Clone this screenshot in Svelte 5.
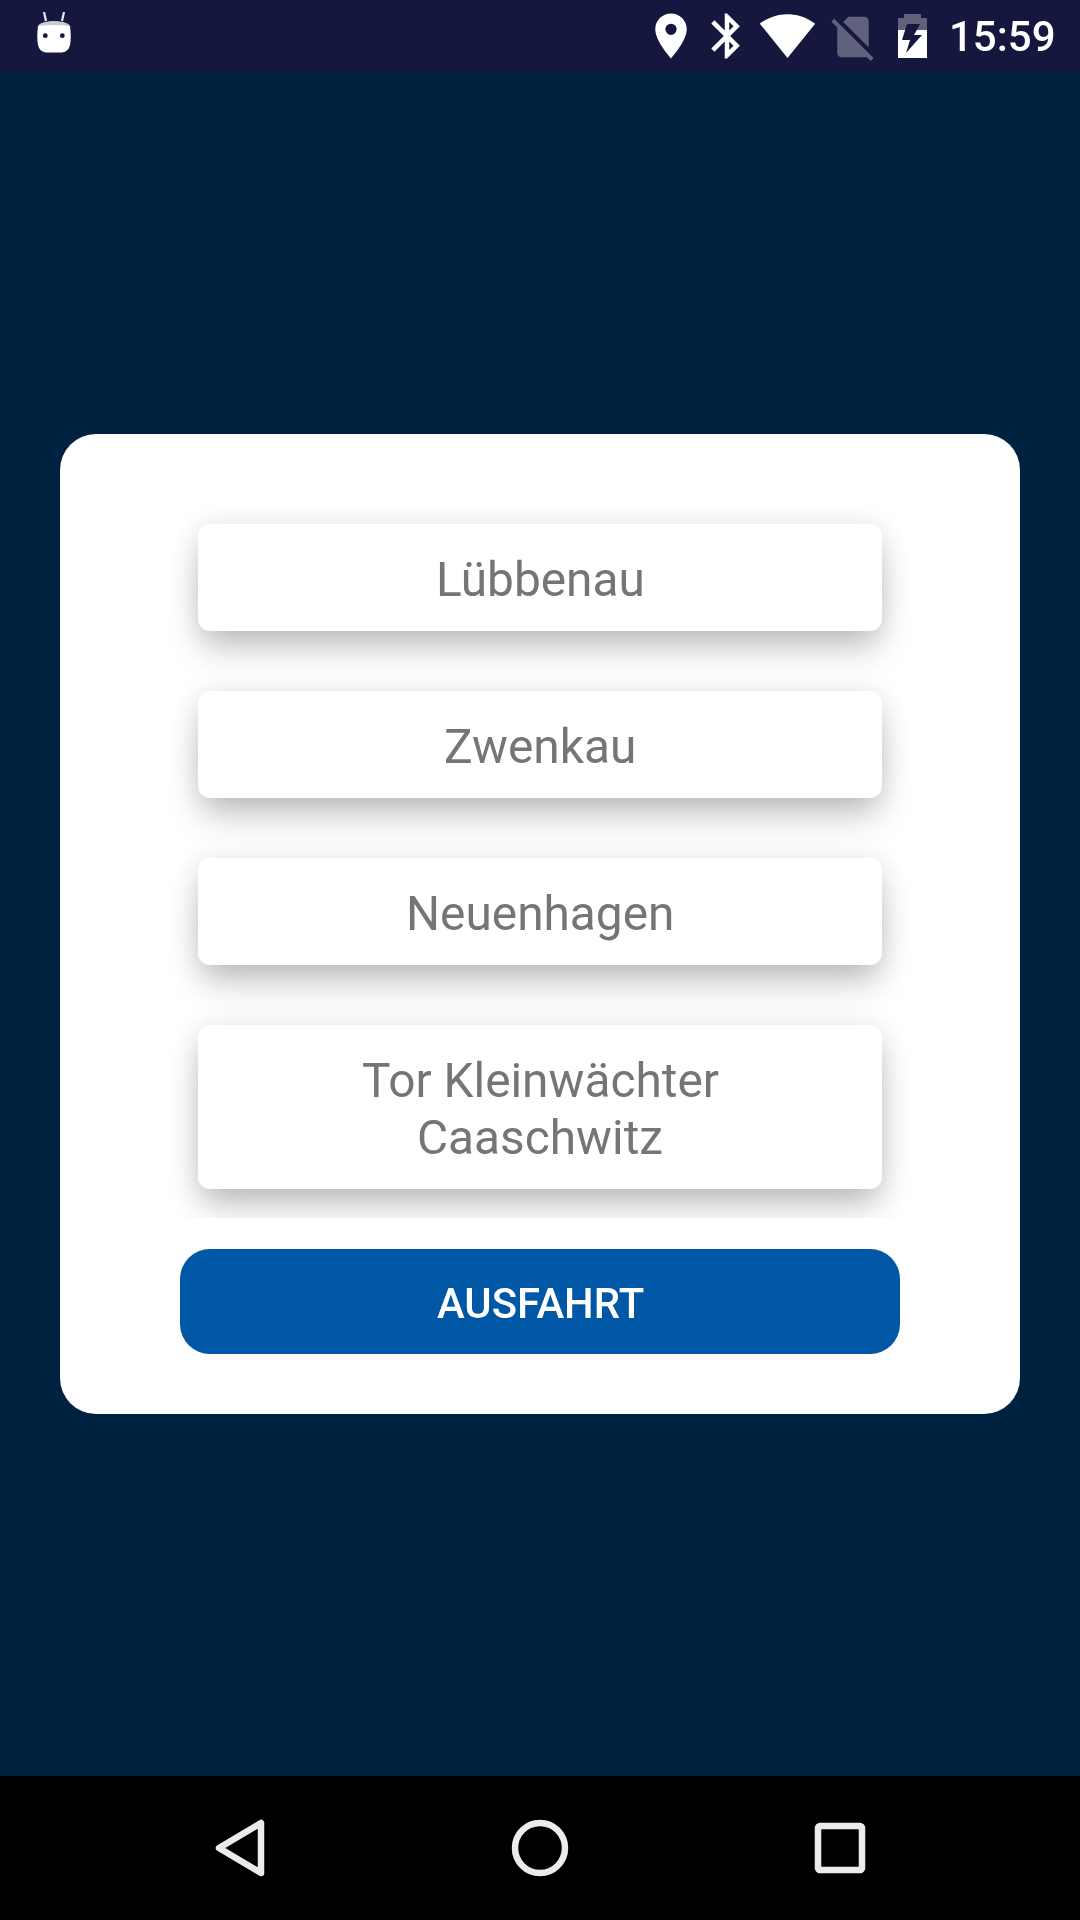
<script>
  const stops = [
    { id: 1, lines: ['Lübbenau'] },
    { id: 2, lines: ['Zwenkau'] },
    { id: 3, lines: ['Neuenhagen'] },
    { id: 4, lines: ['Tor Kleinwächter', 'Caaschwitz'] }
  ];
</script>

<div class="screen">
  <header class="status">
    <svg class="robot" viewBox="0 0 34 41" width="34" height="41">
      <path d="M7 0 L9 9 M27 0 L25 9" stroke="#e8e8ee" stroke-width="2.2" fill="none"/>
      <path d="M9 10 Q17 8.5 25 10 Q31 11 33 14 Q34.5 25 33 33 Q31.5 40 25 40.5 H9 Q2.5 40 1 33 Q-0.5 25 1 14 Q3 11 9 10Z" fill="#fff"/>
      <path d="M9 10 Q17 8.5 25 10 Q31 11 33 14 Q17 12 1 14 Q3 11 9 10Z" fill="#c9cad2"/>
      <circle cx="8.3" cy="23.7" r="2.4" fill="#15173f"/>
      <circle cx="25.3" cy="23.7" r="2.4" fill="#15173f"/>
    </svg>
    <div class="spacer"></div>
    <svg class="ic loc" viewBox="0 0 24 24"><path fill="#fff" d="M12 2C8.13 2 5 5.13 5 9c0 5.25 7 13 7 13s7-7.75 7-13c0-3.87-3.13-7-7-7zm0 9.5a2.5 2.5 0 0 1 0-5 2.5 2.5 0 0 1 0 5z"/></svg>
    <svg class="ic bt" viewBox="0 0 24 24"><path fill="#fff" d="M17.71 7.71L12 2h-1v7.59L6.41 5 5 6.41 10.59 12 5 17.59 6.41 19 11 14.41V22h1l5.71-5.71-4.3-4.29 4.3-4.29zM13 5.83l1.88 1.88L13 9.59V5.83zm1.88 10.46L13 18.17v-3.76l1.88 1.88z"/></svg>
    <svg class="ic wifi" viewBox="0 0 24 24"><path fill="#fff" d="M12.01 21.49L23.64 7c-.45-.34-4.93-4-11.64-4C5.28 3 .81 6.66.36 7l11.64 14.5.01-.01z"/></svg>
    <svg class="ic sim" viewBox="0 0 24 24"><path fill="#fff" fill-opacity=".32" d="M18.99 5c0-1.1-.89-2-1.99-2h-7L7.66 5.34 19 16.68 18.99 5zM3.65 3.88L2.38 5.15 5 7.77V19c0 1.1.9 2 2 2h10.01c.35 0 .67-.1.96-.26l1.88 1.88 1.27-1.27L3.65 3.88z"/></svg>
    <svg class="batt" viewBox="0 0 29 44" width="29" height="44">
      <path fill="#fff" fill-opacity=".32" d="M6 0H23V4H29V16H0V4H6Z"/>
      <path fill="#fff" d="M0 16H29V44H0Z"/>
      <path fill="#15173f" d="M9 10H22L16 21H24L8 39L12 26H4Z"/>
    </svg>
    <span class="time">15:59</span>
  </header>

  <main class="main">
    <section class="card">
      <div class="list">
        {#each stops as stop (stop.id)}
          <div class="item">
            {#each stop.lines as line}<span>{line}</span>{/each}
          </div>
        {/each}
      </div>
      <button class="exit"><span>AUSFAHRT</span></button>
    </section>
  </main>

  <nav class="nav">
    <svg class="nb" viewBox="0 0 60 60" width="60" height="60"><path d="M51 5 V55 L9 30 Z" fill="none" stroke="#ececec" stroke-width="6.5" stroke-linejoin="round"/></svg>
    <svg class="nb" viewBox="0 0 60 60" width="60" height="60"><circle cx="30" cy="30" r="25" fill="none" stroke="#ececec" stroke-width="6.5"/></svg>
    <svg class="nb" viewBox="0 0 60 60" width="60" height="60"><rect x="8" y="8" width="44" height="44" rx="2" fill="none" stroke="#ececec" stroke-width="6.5"/></svg>
  </nav>
</div>

<style>
  :global(body) { margin: 0; }
  .screen {
    width: 1080px;
    height: 1920px;
    display: flex;
    flex-direction: column;
    background: #002241;
    font-family: Roboto, sans-serif;
    overflow: hidden;
  }
  .status {
    height: 72px;
    flex: none;
    display: flex;
    align-items: center;
    background: #15173f;
    padding: 0 24px 0 37px;
    box-sizing: border-box;
  }
  .robot { margin-top: -7px; }
  .spacer { flex: 1; }
  .ic { width: 54px; height: 54px; flex: none; }
  .bt { margin-left: 2px; }
  .wifi { width: 57px; height: 57px; margin-left: 5px; margin-top: -1px; }
  .sim { margin-left: 10px; margin-top: 2px; }
  .batt { margin-left: 18px; }
  .time {
    margin-left: 22px;
    font-size: 42px;
    font-weight: 500;
    color: #fff;
    will-change: transform;
  }
  .main {
    flex: 1;
    display: flex;
    align-items: center;
    justify-content: center;
  }
  .card {
    width: 960px;
    height: 980px;
    box-sizing: border-box;
    background: #fff;
    border-radius: 36px;
    padding: 60px 0;
    display: flex;
    flex-direction: column;
  }
  .list {
    height: 724px;
    flex: none;
    overflow: hidden;
    padding: 30px 138px 0;
    box-sizing: border-box;
    display: flex;
    flex-direction: column;
    gap: 60px;
  }
  .item {
    flex: none;
    min-height: 107px;
    box-sizing: border-box;
    padding: 28px 20px 22px;
    border-radius: 12px;
    background: #fff;
    box-shadow: 0 20px 34px -4px rgba(0,0,0,.24), 0 0 28px rgba(0,0,0,.09);
    display: flex;
    flex-direction: column;
    align-items: center;
    justify-content: center;
    color: #757575;
    font-size: 47.8px;
    line-height: 57px;
  }
  .item span { will-change: transform; }
  .exit {
    margin: 31px 120px 0;
    height: 105px;
    border: 0;
    border-radius: 30px;
    background: #0057a5;
    color: #fff;
    font-family: inherit;
    font-size: 41.8px;
    font-weight: 500;
    padding: 3px 0 0 2px;
  }
  .exit span { display: inline-block; will-change: transform; }
  .nav {
    height: 144px;
    flex: none;
    background: #000;
    display: flex;
    align-items: center;
    justify-content: center;
    gap: 240px;
  }
  .nb { display: block; }
</style>
